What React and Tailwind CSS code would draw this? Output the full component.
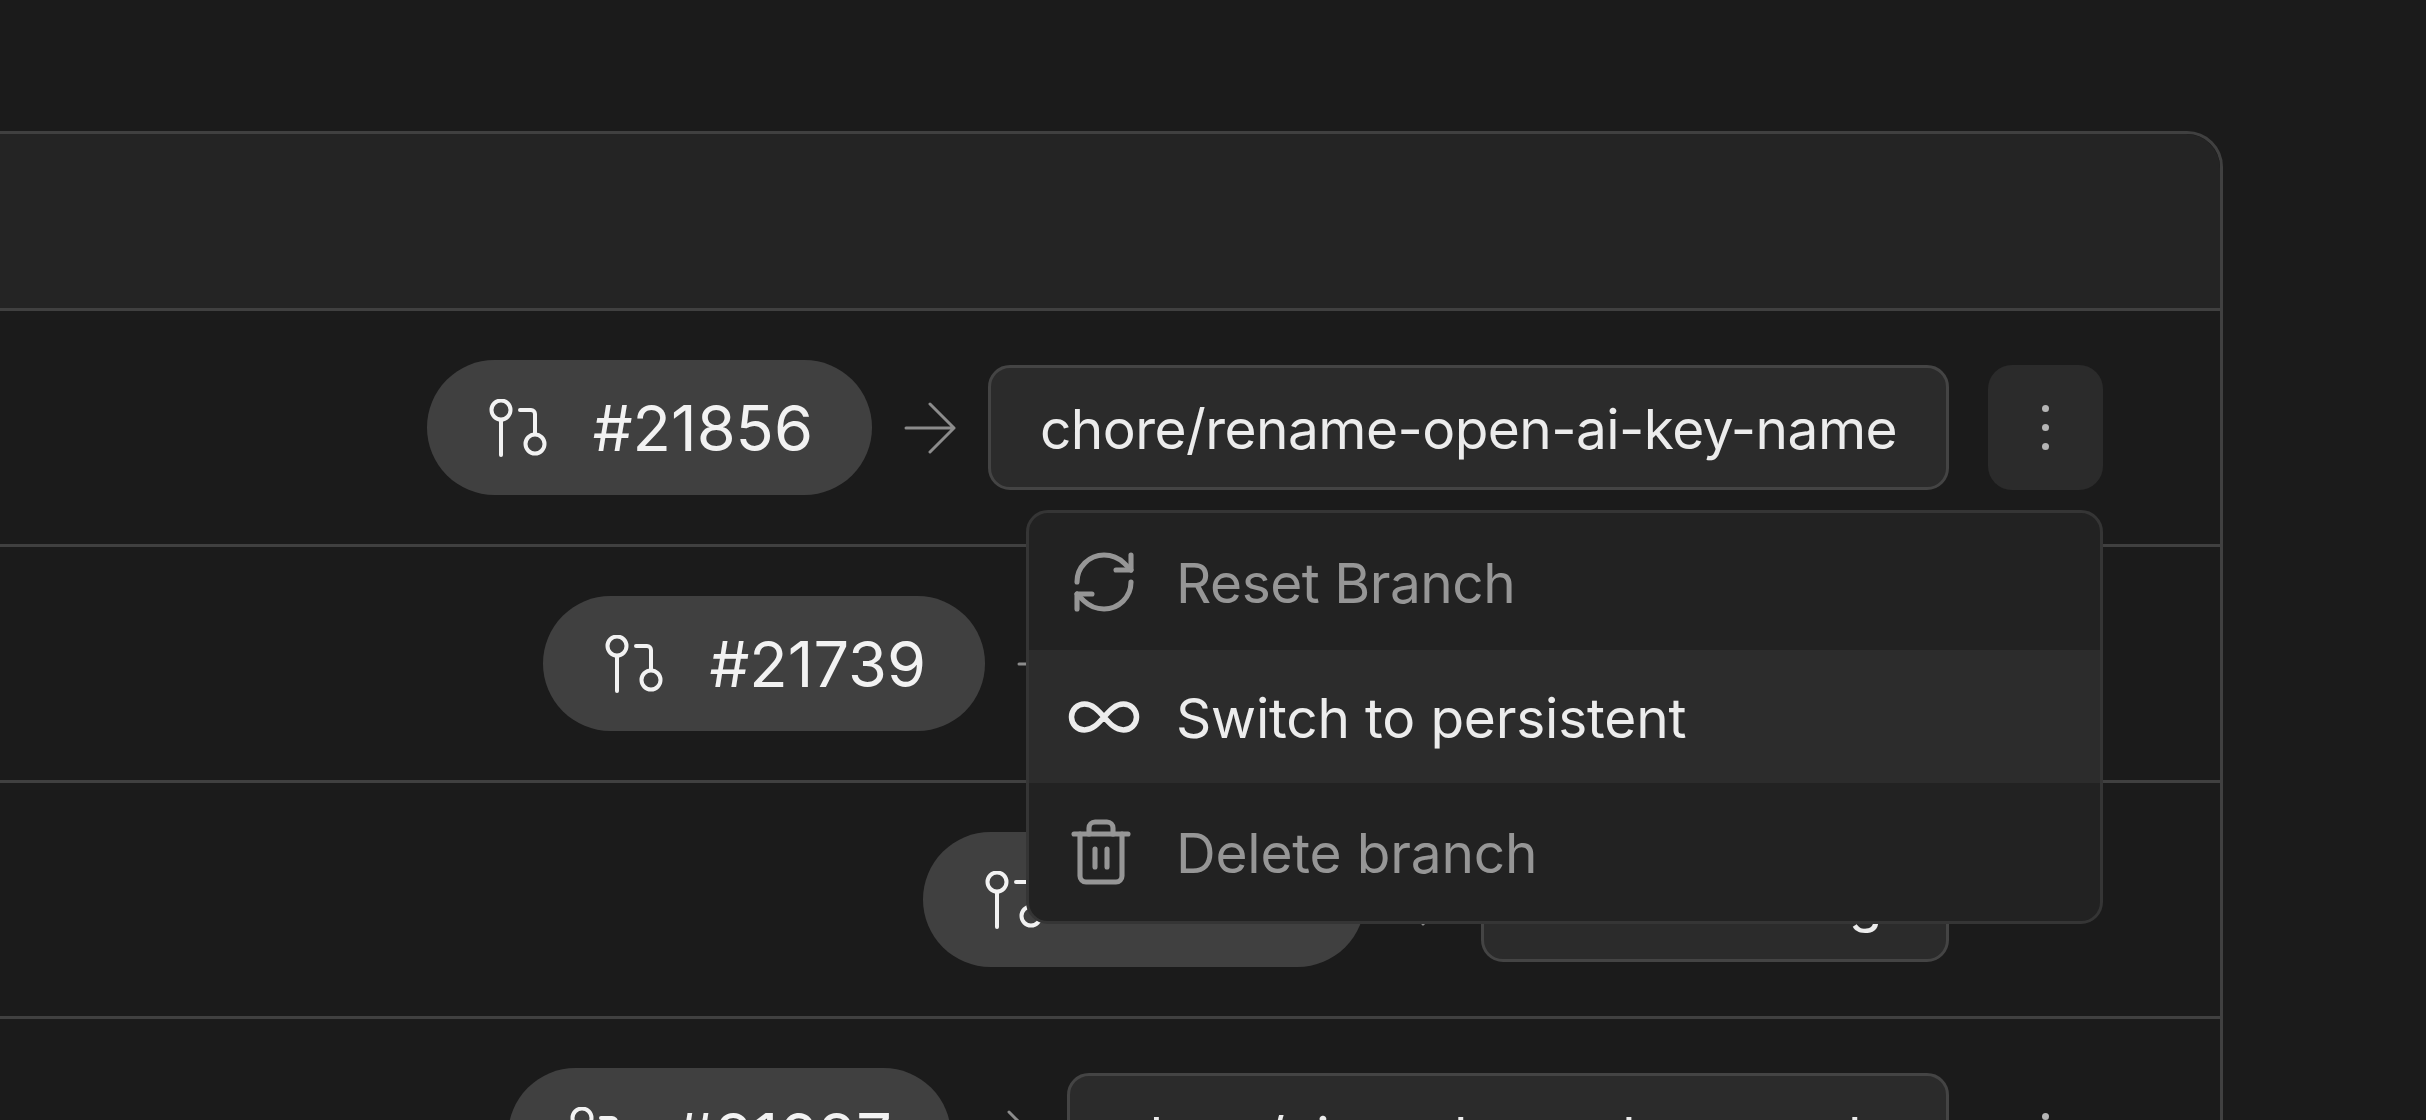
import { RefreshCw, Infinity as InfinityIcon, Trash2 } from 'lucide-react';

const rows = [
  { id: '#21856', branch: 'chore/rename-open-ai-key-name', box: 'w-[961px]' },
  { id: '#21739', branch: 'chore/upgrade-node-version', box: 'w-[848px]' },
  { id: '#21697', branch: 'rebase-listing', box: 'w-[468px]' },
  { id: '#21687', branch: 'chore/ui-mode-mark-scaned', box: 'w-[882px]' },
];

function PullIcon() {
  return (
    <svg width="58" height="58" viewBox="0 0 58 58" fill="none" stroke="currentColor" strokeWidth="4" strokeLinecap="round" className="shrink-0">
      <circle cx="12" cy="11" r="9.5" />
      <path d="M12 21v35" />
      <path d="M31 11h11a4 4 0 0 1 4 4v20" />
      <circle cx="46" cy="45" r="9.5" />
    </svg>
  );
}

function ArrowIcon() {
  return (
    <svg width="52" height="52" viewBox="0 0 52 52" fill="none" stroke="#8c8c8c" strokeWidth="3" strokeLinecap="round" strokeLinejoin="round" className="shrink-0">
      <path d="M2 26h48M26 2l24 24-24 24" />
    </svg>
  );
}

function BranchMenu() {
  return (
    <div className="absolute top-full right-0 z-10 mt-[20px] w-[1077px] overflow-hidden rounded-[22px] border-[3px] border-[#353535] bg-[#222222] text-[55px] tracking-[-0.2px] text-[#969696]">
      <div className="flex h-[137px] items-center gap-[32px] px-[35px]">
        <span className="flex w-[80px] justify-center"><RefreshCw size={72} strokeWidth={1.7} /></span>
        <span className="pt-[3px] tracking-[-0.5px]">Reset Branch</span>
      </div>
      <div className="flex h-[133px] items-center gap-[32px] bg-[#2c2c2c] px-[35px] text-[#ececec]">
        <span className="flex w-[80px] justify-center"><InfinityIcon size={78} strokeWidth={1.7} /></span>
        <span className="pt-[3px]">Switch to persistent</span>
      </div>
      <div className="flex h-[138px] items-center gap-[32px] px-[35px]">
        <span className="flex w-[80px] justify-center pr-[6px]"><Trash2 size={72} strokeWidth={1.7} /></span>
        <span className="pt-[2px]">Delete branch</span>
      </div>
    </div>
  );
}

function Row({ row, open }) {
  return (
    <div className="flex h-[236px] shrink-0 items-center justify-end border-b-[3px] border-[#404040] pr-[117px]">
      <div className="flex h-[135px] items-center gap-[46px] rounded-full bg-[#404040] pr-[59px] pl-[62px] text-[63px] text-[#f2f2f2]">
        <PullIcon />
        <span className="pt-[2px]">{row.id}</span>
      </div>
      <div className="mx-[32px]"><ArrowIcon /></div>
      <div className={`flex h-[125px] items-center rounded-[22px] border-[3px] border-[#444444] bg-[#2b2b2b] px-[49px] text-[55px] tracking-[-0.55px] text-[#ececec] ${row.box}`}>
        <span className="overflow-hidden pt-[3px] whitespace-nowrap">{row.branch}</span>
      </div>
      <div className="relative ml-[39px]">
        <button className={`flex h-[125px] w-[115px] flex-col items-center justify-center gap-[12px] rounded-[24px] ${open ? 'bg-[#2b2b2b]' : ''}`}>
          <span className="size-[7px] rounded-full bg-[#b5b5b5]" />
          <span className="size-[7px] rounded-full bg-[#b5b5b5]" />
          <span className="size-[7px] rounded-full bg-[#b5b5b5]" />
        </button>
        {open && <BranchMenu />}
      </div>
    </div>
  );
}

export default function App() {
  return (
    <div className="h-[1120px] overflow-hidden bg-[#1b1b1b] pt-[131px] pr-[203px] font-['Inter',sans-serif]">
      <div className="-ml-[40px] rounded-tr-[36px] border-[3px] border-[#404040]">
        <div className="h-[177px] rounded-tr-[34px] border-b-[3px] border-[#404040] bg-[#242424]" />
        {rows.map((row, i) => (
          <Row key={row.id} row={row} open={i === 0} />
        ))}
      </div>
    </div>
  );
}
